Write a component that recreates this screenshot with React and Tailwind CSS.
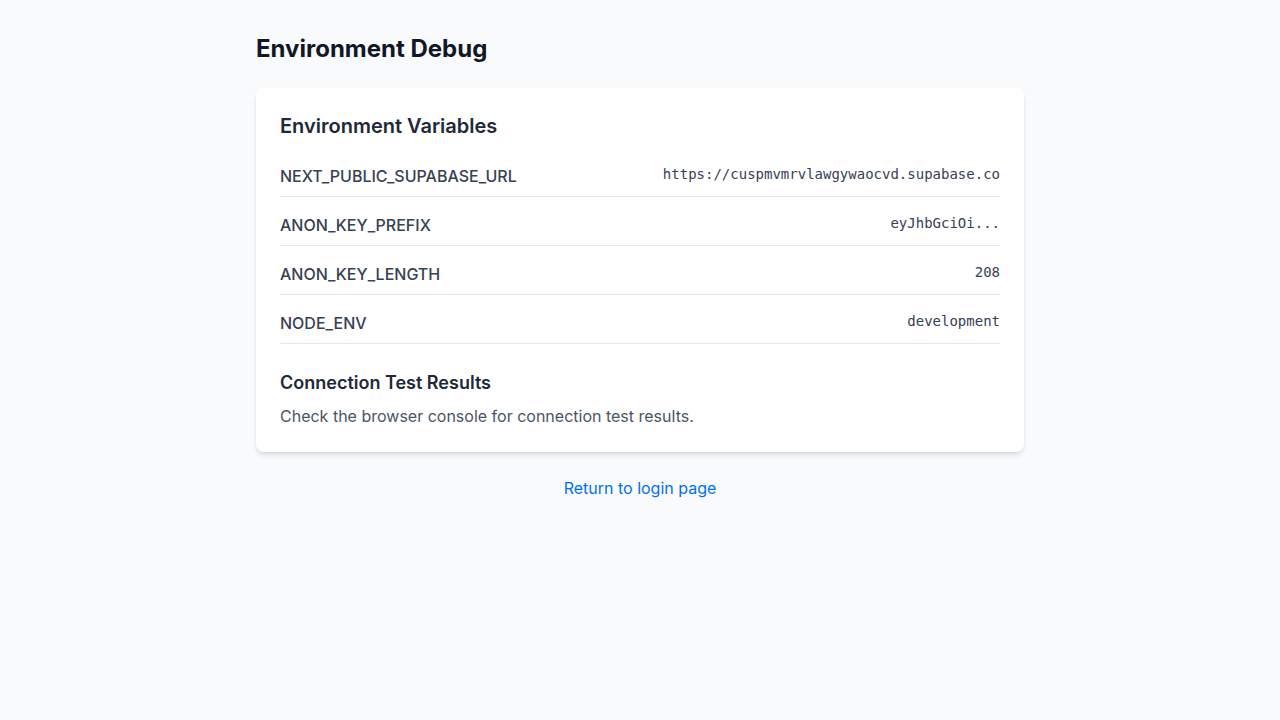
import React from 'react';

const envVars = [
  { name: 'NEXT_PUBLIC_SUPABASE_URL', value: 'https://cuspmvmrvlawgywaocvd.supabase.co' },
  { name: 'ANON_KEY_PREFIX', value: 'eyJhbGciOi...' },
  { name: 'ANON_KEY_LENGTH', value: '208' },
  { name: 'NODE_ENV', value: 'development' },
];

const App = () => {
  return (
    <div className="min-h-screen bg-gray-50 font-['Inter',sans-serif]">
      <div className="max-w-3xl mx-auto pt-8">
        <h1 className="text-2xl font-bold text-gray-900 pt-px mb-[23px]">Environment Debug</h1>

        {/* Variables card */}
        <div className="bg-white rounded-lg shadow-md p-6">
          <h2 className="text-xl font-semibold text-gray-800 mb-4">Environment Variables</h2>

          <div className="space-y-2 mb-6">
            {envVars.map((v) => (
              <div key={v.name} className="flex justify-between py-2 border-b border-gray-200">
                <span className="font-medium text-gray-700">{v.name}</span>
                <span className="text-sm text-gray-700 font-['DejaVu_Sans_Mono',monospace]">{v.value}</span>
              </div>
            ))}
          </div>

          <h3 className="text-lg leading-7 font-semibold text-gray-800 pt-px mb-[7px]">Connection Test Results</h3>
          <p className="text-gray-600">Check the browser console for connection test results.</p>
        </div>

        <div className="mt-6 text-center">
          <a href="#" className="text-[#0070f3] hover:underline">Return to login page</a>
        </div>
      </div>
    </div>
  );
};

export default App;
